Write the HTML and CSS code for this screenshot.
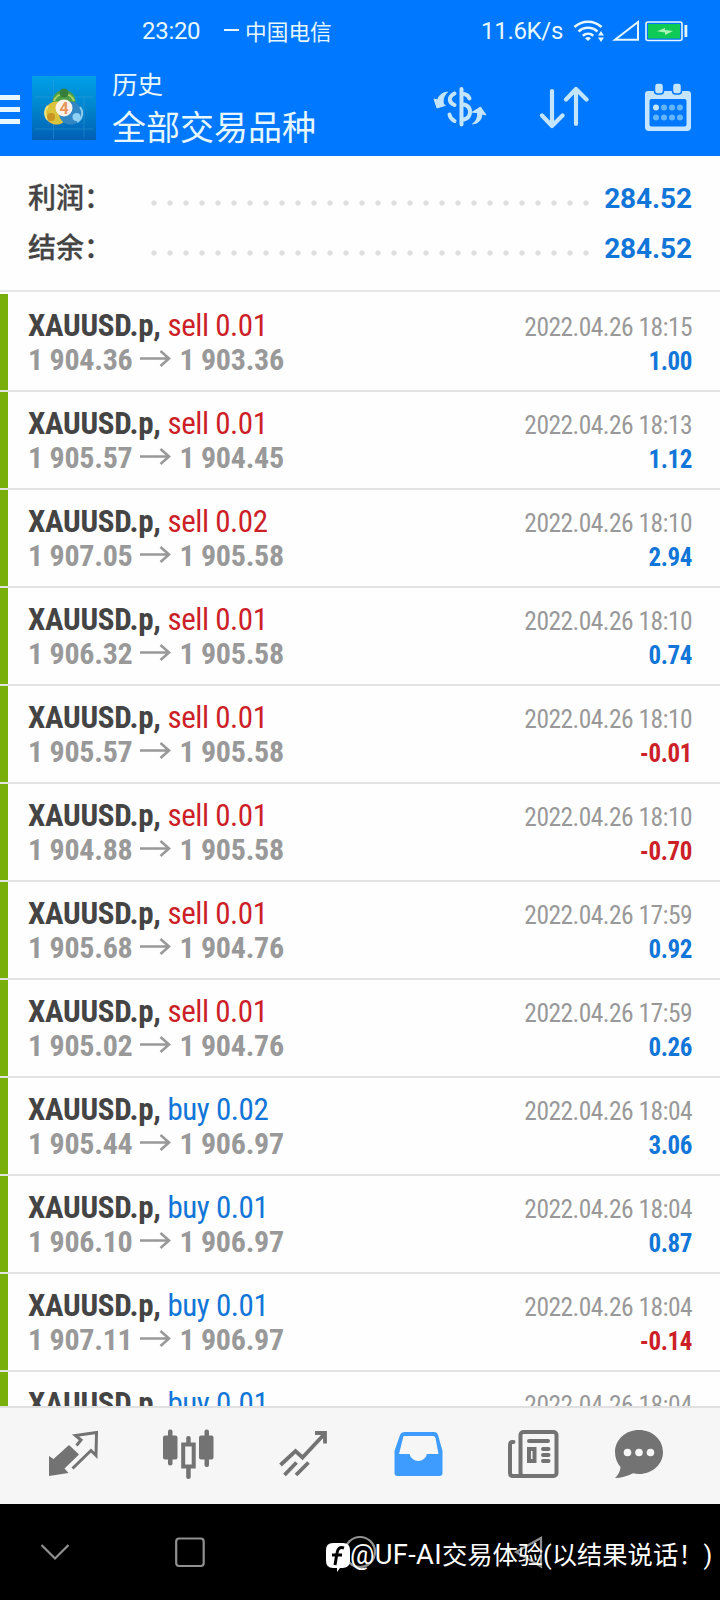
FILE: index.html
```
<!DOCTYPE html>
<html lang="zh-CN">
<head>
<meta charset="utf-8">
<title>历史</title>
<link rel="stylesheet" href="styles.css">
</head>
<body>
<div class="phone">
  <header class="header">
    <div class="status">
      <span class="clock">23:20</span>
      <span class="carrier"><i class="dash"></i>中国电信</span>
      <span class="speed">11.6K/s</span>
      <svg class="status-icons" width="116" height="24" viewBox="0 0 116 24">
        <g fill="none" stroke="#e6f7ff" stroke-width="2.6">
          <path d="M1.500 8C9 1 21 1 28.500 8"/>
          <path d="M5.500 12.500c5.500-5 13.500-5 19 0"/>
          <path d="M9.800 16.800c3.200-2.800 7.600-2.800 10.500 0"/>
        </g>
        <path d="M15 22l-3-2.700q3-2.500 6 0z" fill="#e6f7ff"/>
        <path d="M28 12l3 4.500h-6zM28 23l-3-4.500h6z" fill="#e6f7ff"/>
        <path d="M42 20.800H65V3z" fill="none" stroke="#e6f7ff" stroke-width="2"/>
        <rect x="73" y="3" width="36" height="18.500" rx="2" fill="none" stroke="#e6f7ff" stroke-width="1.600"/>
        <rect x="75" y="5" width="32" height="14.500" fill="#0fca55"/>
        <path d="M84 12.200l8-3.200v2l8 1-8 4v-2.500z" fill="#a9f5b8"/>
        <rect x="111.500" y="6" width="2.800" height="12" fill="#e6f7ff"/>
      </svg>
    </div>
    <div class="appbar">
      <span class="menu"><i></i><i></i><i></i></span>
      <svg class="logo" width="64" height="64" viewBox="0 0 64 64">
        <defs>
          <linearGradient id="sky" x1="0" y1="0" x2="0" y2="1"><stop offset="0" stop-color="#00a0e8"/><stop offset=".5" stop-color="#0084cc"/><stop offset="1" stop-color="#005fb4"/></linearGradient>
        </defs>
        <rect width="64" height="64" fill="url(#sky)"/>
        <path d="M21.500 3v60M52 20v42M3 21h58M3 53h58" stroke="#45a8df" stroke-width=".7" opacity=".5"/>
        <circle cx="32" cy="25.500" r="11.500" fill="#4f9f48"/>
        <path d="M22 25a10.500 10.500 0 0 1 20 0" fill="none" stroke="#a5cf6a" stroke-width="2"/>
        <circle cx="24.500" cy="37" r="11.500" fill="#d9c23c"/>
        <path d="M16 30a10 10 0 0 0 0 14" fill="none" stroke="#f1e884" stroke-width="2"/>
        <circle cx="38.500" cy="37" r="11.500" fill="#3286c4"/>
        <path d="M48 31a10 10 0 0 1-3 15" fill="none" stroke="#8dcdf0" stroke-width="2"/>
        <circle cx="32" cy="17" r="4.500" fill="#357f3a"/>
        <circle cx="19" cy="41" r="4" fill="#c99422"/>
        <circle cx="44.500" cy="41" r="4" fill="#8fd2f5"/>
        <circle cx="32" cy="32" r="8.500" fill="#fbf3ea"/>
        <text x="32" y="38" text-anchor="middle" class="logo-num">4</text>
      </svg>
      <div class="titles">
        <div class="title-small">历史</div>
        <div class="title-big">全部交易品种</div>
      </div>
      <svg class="act-money" width="54" height="42" viewBox="0 0 54 42" fill="none" stroke="#c4e5ff" stroke-width="4" stroke-linecap="round">
        <path d="M28.500 3v35.500"/>
        <path d="M21.500 7.500c-6.500 3.500-6 9 0 11.500"/><path d="M31 8c3 .5 4.500 2 5.500 4.500M31 18.500c8 2 8 13 0 15"/><path d="M16.500 28.500c.5 3 2 5 5 6.500"/>
        <path d="M10.500 18c-1-4 0-8 4-12q-8 1-10 8L1 13l3 9 8-2.500z" fill="#c4e5ff" stroke-width="1"/>
        <path d="M44.500 27c.5 4-1 8-5 11q9-1 9.500-10l4 1-5.500-8-8 5z" fill="#c4e5ff" stroke-width="1"/>
      </svg>
      <svg class="act-sort" width="50" height="44" viewBox="0 0 50 44" fill="none" stroke="#c4e5ff" stroke-width="4.200" stroke-linecap="round" stroke-linejoin="round">
        <path d="M13 5v35M3 29.500l10 10.500 10.500-10.500M37 38V3M27 13.500L37 3l10.500 10.500"/>
      </svg>
      <svg class="act-cal" width="46" height="48" viewBox="0 0 46 48">
        <path d="M3 8H43a3 3 0 0 1 3 3V44a4 4 0 0 1-4 4H4a4 4 0 0 1-4-4V11a3 3 0 0 1 3-3z" fill="#c4e5ff"/>
        <rect x="4.500" y="16" width="37" height="27.500" rx="2" fill="#0078ff"/>
        <g fill="#c4e5ff" stroke="#0078ff" stroke-width="1.500"><rect x="9.500" y="0" width="9" height="11" rx="3"/><rect x="27.500" y="0" width="9" height="11" rx="3"/></g>
        <circle cx="11" cy="24.500" r="3" fill="#c4e5ff"/>
        <g fill="#62b5fb"><circle cx="19" cy="24.500" r="3"/><circle cx="27" cy="24.500" r="3"/><circle cx="35" cy="24.500" r="3"/><circle cx="11" cy="34.500" r="3"/><circle cx="19" cy="34.500" r="3"/><circle cx="27" cy="34.500" r="3"/><circle cx="35" cy="34.500" r="3"/></g>
      </svg>
    </div>
  </header>

  <section class="summary">
    <div class="sum-row"><span class="sum-label">利润：</span><span class="dots"></span><span class="sum-value">284.52</span></div>
    <div class="sum-row"><span class="sum-label">结余：</span><span class="dots"></span><span class="sum-value">284.52</span></div>
  </section>

  <main class="deals" id="deals"></main>

  <nav class="tabs">
    <svg width="720" height="96" viewBox="0 0 720 96">
      <g fill="#737373" stroke="none">
        <path d="M49 48l4.500 3 15.500-14 10 9.500-14.500 14 4 4.500-19.500 3z"/>
        <path d="M72.500 60.500l18.500-18 5 5 .5-23-21 3 5.500 4.500-4.500 5.500" fill="none" stroke="#737373" stroke-width="3"/>
        <rect x="163" y="27.500" width="14.500" height="24" rx="2"/><rect x="168" y="21.500" width="4.500" height="36" rx="2"/>
        <rect x="199" y="27.500" width="14.500" height="24" rx="2"/><rect x="204.500" y="21.500" width="4.500" height="37.500" rx="2"/>
        <rect x="186.200" y="28" width="4.500" height="43" rx="2"/><rect x="183.200" y="36.500" width="10.500" height="22" fill="#f6f6f6" stroke="#737373" stroke-width="4"/>
      </g>
      <g fill="none" stroke="#737373" stroke-width="3.800">
        <path d="M280.500 57l15-14 7 6.500L324 26.500M315 25h10v10.500M284.500 67l12-12.500M296 67l12.500-12.500"/>
      </g>
      <path d="M405 24h29q3 0 4 3l4.500 16V65q0 3-3 3H397.500q-3 0-3-3V43l5.500-16q1-3 5-3z" fill="#3e9bff"/>
      <path d="M404 28h29q2 0 2.500 2l3 16h-11.500a9 9 0 0 1-17.500 0H399l4-16q.3-2 1-2z" fill="#f6f6f6"/>
      <g fill="none" stroke="#737373" stroke-width="4" stroke-linecap="round">
        <rect x="520.500" y="24" width="36" height="44" rx="3"/>
        <path d="M513.500 34h-1q-2.500 0-2.500 3V65q0 3 3 3h12"/>
        <path d="M529 33h19M543 41h5.500M543 47h5.500M543 53h5.500"/>
        <rect x="529" y="41" width="5.500" height="12"/>
      </g>
      <path d="M639 22c13.500 0 24 9.700 24 22s-10.500 22-24 22q-3 0-6-.8-9 4.800-18 4.800 5-4.500 5.500-11-5.500-6.500-5.500-15c0-12.300 10.500-22 24-22z" fill="#737373"/>
      <g fill="#f6f6f6"><circle cx="627.500" cy="44.500" r="3.800"/><circle cx="639" cy="44.500" r="3.800"/><circle cx="650.500" cy="44.500" r="3.800"/></g>
    </svg>
  </nav>

  <footer class="sysnav">
    <svg width="720" height="96" viewBox="0 0 720 96" fill="none" stroke="#909090" stroke-width="2.200">
      <path d="M41.500 41L55 54.500 68.500 41"/>
      <rect x="176.200" y="34.500" width="27.500" height="27.500" rx="3"/>
      <circle cx="360" cy="48" r="15"/>
      <path d="M541 34v28.500L516 48z"/>
    </svg>
    <div class="watermark">
      <svg width="24" height="29" viewBox="0 0 24 29"><path d="M7 0h10q7 0 7 7v11q0 6-7 7h-3l-3 4v-4H7q-7 0-7-7V7Q0 0 7 0z" fill="#fff"/><path d="M18 5q-6-2-7 5L9 22M6 12h10" fill="none" stroke="#000" stroke-width="3"/></svg>
      <span class="mark-text"><span class="mark-latin">@UF-AI</span>交易体验(以结果说话！)</span>
    </div>
  </footer>
</div>
<script src="deals.js"></script>
</body>
</html>
```
FILE: styles.css
```
* { box-sizing: border-box; }
body { margin: 0; background: #fff; font-family: Roboto, "Noto Sans CJK SC", sans-serif; }
.phone { width: 720px; height: 1600px; display: flex; flex-direction: column; overflow: hidden; background: #fefefe; }
.phone svg { display: block; flex: none; }

.header { height: 156px; flex: none; background: #0078ff; color: #e6f7ff; }
.status { height: 62px; display: flex; align-items: center; padding-left: 142px; font-size: 24px; white-space: nowrap; }
.clock { width: 82px; letter-spacing: -0.3px; }
.carrier { width: 257px; display: flex; align-items: center; font-size: 21.700px; padding-bottom: 2px; }
.dash { width: 15px; height: 2px; margin-right: 6px; background: #e6f7ff; }
.speed { width: 92px; letter-spacing: -0.3px; }
.appbar { height: 94px; display: flex; align-items: flex-start; }
.menu { width: 20px; margin: 33px 12px 0 0; display: flex; flex-direction: column; gap: 7px; }
.menu i { height: 5px; background: #e6f7ff; }
.logo { margin-top: 14px; }
.logo-num { font: bold 16px Roboto, sans-serif; fill: #e5945b; }
.titles { width: 321px; margin-left: 16px; white-space: nowrap; }
.title-small { font-size: 25.500px; line-height: 38px; margin-top: 4px; }
.title-big { font-size: 34px; line-height: 44px; margin-top: 2px; }
.act-money { margin-top: 24px; }
.act-sort { margin: 24px 0 0 52px; }
.act-cal { margin: 21px 0 0 56px; }

.summary { height: 136px; flex: none; padding: 17px 28px 0; border-bottom: 2px solid #e6e6e6; margin-bottom: 2px; }
.sum-row { height: 50px; display: flex; align-items: center; }
.sum-label { width: 117px; padding-bottom: 4px; font-size: 28px; font-weight: 500; color: #444; -webkit-text-stroke: 0.3px #444; }
.dots { width: 448px; height: 6px; margin-top: 10px; background: radial-gradient(circle, #dedede 2.200px, transparent 3px) 1px 0 / 16px 6px; }
.sum-value { flex: 1; text-align: right; font-size: 28px; font-weight: 700; color: #1276d8; letter-spacing: -0.1px; }

.deals { flex: 1; min-height: 0; overflow: hidden; }
.deal { height: 98px; padding: 15px 28px 0 20px; border-left: 8px solid #78af0a; position: relative; }
.deal::after { content: ""; position: absolute; left: -8px; right: 0; bottom: 0; height: 2px; background: #e3e3e3; }
.line { height: 34px; line-height: 34px; display: flex; justify-content: space-between; align-items: baseline; white-space: nowrap; font-stretch: 75%; }
.name { font-size: 31px; font-weight: 700; color: #444; letter-spacing: -0.3px; }
.side { font-weight: 400; letter-spacing: -0.450px; }
.sell { color: #cc1f28; }
.buy, .gain { color: #1276d8; }
.loss { color: #cc1f28; }
.prices { font-size: 30px; font-weight: 700; color: #999; letter-spacing: -0.270px; }
.arrow { display: inline-block !important; margin: 0 8px; vertical-align: 3px; }
.date { font-size: 25.500px; color: #999; letter-spacing: -0.540px; }
.result { font-size: 25px; font-weight: 700; letter-spacing: -0.400px; }

.tabs { height: 98px; flex: none; background: #f6f6f6; border-top: 2px solid #e0e0e0; }
.sysnav { height: 96px; flex: none; background: #000; position: relative; }
.watermark { position: absolute; left: 326px; top: 30px; display: flex; color: #fff; white-space: nowrap; }
.watermark svg { margin-top: 9px; }
.mark-text { font-size: 25.300px; line-height: 42px; }
.mark-latin { font-size: 27.300px; letter-spacing: 0.3px; }
```
FILE: deals.js
```
const deals = [
  ["sell", "0.01", "1 904.36", "1 903.36", "18:15", "1.00"],
  ["sell", "0.01", "1 905.57", "1 904.45", "18:13", "1.12"],
  ["sell", "0.02", "1 907.05", "1 905.58", "18:10", "2.94"],
  ["sell", "0.01", "1 906.32", "1 905.58", "18:10", "0.74"],
  ["sell", "0.01", "1 905.57", "1 905.58", "18:10", "-0.01"],
  ["sell", "0.01", "1 904.88", "1 905.58", "18:10", "-0.70"],
  ["sell", "0.01", "1 905.68", "1 904.76", "17:59", "0.92"],
  ["sell", "0.01", "1 905.02", "1 904.76", "17:59", "0.26"],
  ["buy", "0.02", "1 905.44", "1 906.97", "18:04", "3.06"],
  ["buy", "0.01", "1 906.10", "1 906.97", "18:04", "0.87"],
  ["buy", "0.01", "1 907.11", "1 906.97", "18:04", "-0.14"],
  ["buy", "0.01", "", "", "18:04", ""]
];
const arrow = '<svg class="arrow" width="31" height="17" viewBox="0 0 31 17" fill="none" stroke="#999" stroke-width="2.6"><path d="M0 8.500H29M20.500 1l8.500 7.500-8.500 7.500"/></svg>';
document.getElementById("deals").innerHTML = deals.map(([side, lot, from, to, time, result]) => `
  <article class="deal">
    <div class="line"><span class="name">XAUUSD.p, <span class="side ${side}">${side} ${lot}</span></span><span class="date">2022.04.26 ${time}</span></div>
    ${result ? `<div class="line"><span class="prices">${from}${arrow}${to}</span><span class="result ${result[0] === "-" ? "loss" : "gain"}">${result}</span></div>` : ""}
  </article>`).join("");
```
